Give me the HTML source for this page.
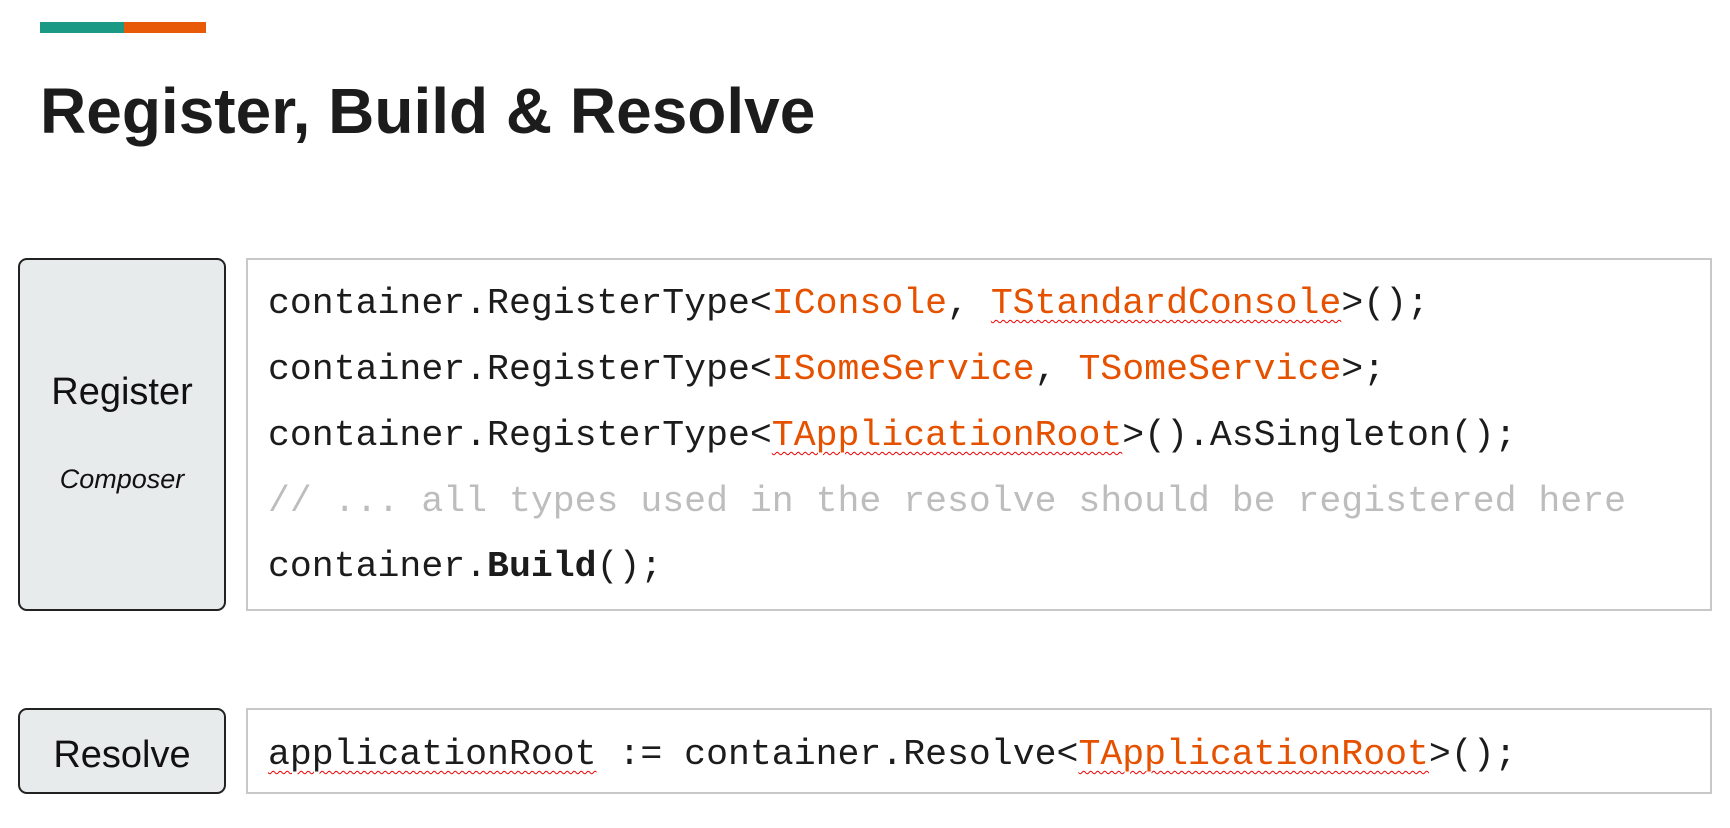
<!DOCTYPE html>
<html><head><meta charset="utf-8"><style>
body{margin:0;width:1730px;height:828px;background:#fff;position:relative;overflow:hidden;font-family:"Liberation Sans",sans-serif;}
.bar{position:absolute;top:22px;height:11px}
h1{position:absolute;left:40px;top:0;margin:0;font-size:64px;font-weight:bold;color:#1c1c1c;line-height:1;white-space:nowrap}
.lab{position:absolute;left:18px;width:208px;background:#e8ebec;border:2px solid #222;border-radius:9px;box-sizing:border-box}
.code{position:absolute;left:246px;width:1466px;border:2px solid #c8c8c8;box-sizing:border-box}
.l{position:absolute;left:268px;font-family:"Liberation Mono",monospace;font-size:36.5px;line-height:1;color:#1c1c1c;white-space:pre}
.o{color:#e65100}
.w{text-decoration:underline wavy #e00;text-decoration-thickness:1px;text-underline-offset:6px}
.c{color:#bdbdbd}
.t{position:absolute;width:208px;left:18px;text-align:center;line-height:1;color:#111}
</style></head><body>
<div class="bar" style="left:40px;width:84px;background:#1a9985"></div>
<div class="bar" style="left:124px;width:82px;background:#e85a08"></div>
<h1 style="top:79px">Register, Build &amp; Resolve</h1>

<div class="lab" style="top:258px;height:353px"></div>
<div class="code" style="top:258px;height:353px"></div>
<div class="t" style="top:373px;font-size:38px">Register</div>
<div class="t" style="top:466px;font-size:27px;font-style:italic">Composer</div>
<div class="l" style="top:286px">container.RegisterType&lt;<span class="o">IConsole</span>, <span class="o w">TStandardConsole</span>&gt;();</div>
<div class="l" style="top:352px">container.RegisterType&lt;<span class="o">ISomeService</span>, <span class="o">TSomeService</span>&gt;;</div>
<div class="l" style="top:418px">container.RegisterType&lt;<span class="o w">TApplicationRoot</span>&gt;().AsSingleton();</div>
<div class="l c" style="top:484px">// ... all types used in the resolve should be registered here</div>
<div class="l" style="top:549px">container.<b>Build</b>();</div>

<div class="lab" style="top:708px;height:86px"></div>
<div class="code" style="top:708px;height:86px"></div>
<div class="t" style="top:736px;font-size:38px">Resolve</div>
<div class="l" style="top:737px"><span class="w">applicationRoot</span> := container.Resolve&lt;<span class="o w">TApplicationRoot</span>&gt;();</div>
</body></html>
